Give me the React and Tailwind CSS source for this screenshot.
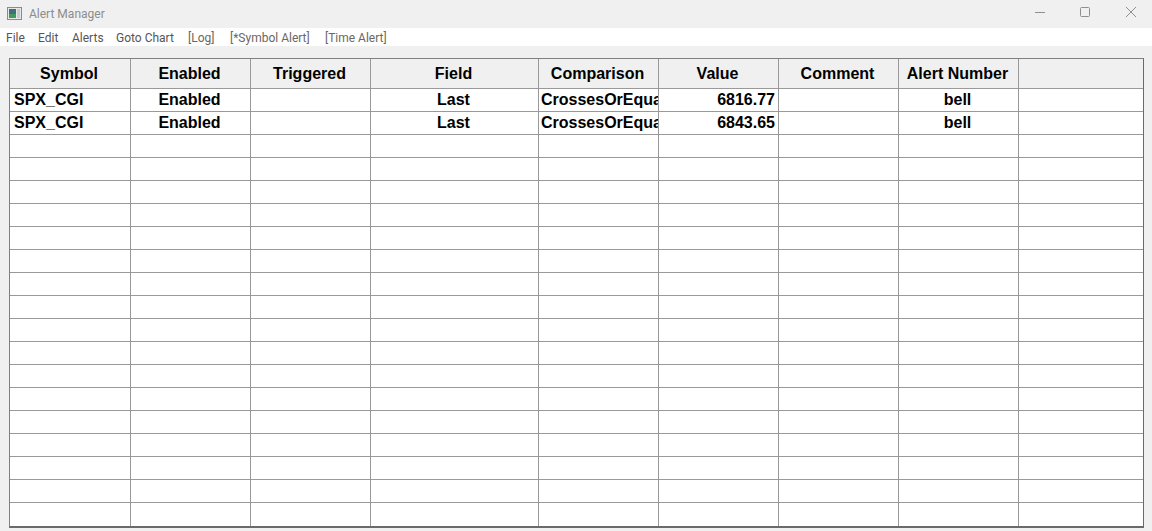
import React from 'react'

const menus = [
  { label: 'File', width: 'w-[18px]' },
  { label: 'Edit', width: 'w-[20px]' },
  { label: 'Alerts', width: 'w-[30px]' },
  { label: 'Goto Chart', width: 'w-[58px]' },
  { label: '[Log]', width: 'w-[28px]' },
  { label: '[*Symbol Alert]', width: 'w-[81px]' },
  { label: '[Time Alert]', width: 'w-[63px]' },
]
const headers = ['Symbol', 'Enabled', 'Triggered', 'Field', 'Comparison', 'Value', 'Comment', 'Alert Number', '']

const alerts = [
  { symbol: 'SPX_CGI', enabled: 'Enabled', field: 'Last', comparison: 'CrossesOrEqual', value: '6816.77', alertNumber: 'bell' },
  { symbol: 'SPX_CGI', enabled: 'Enabled', field: 'Last', comparison: 'CrossesOrEqual', value: '6843.65', alertNumber: 'bell' },
]

const emptyRows = Array.from({ length: 17 })
const gridCols = 'grid grid-cols-[121px_120px_120px_168px_120px_120px_120px_120px_124px]'

const AppIcon = () => (
  <svg width="15" height="13" viewBox="0 0 15 13" className="shrink-0">
    <rect x="0.5" y="0.5" width="14" height="12" fill="#e8e8e8" stroke="#8a8a8a" />
    <rect x="2" y="2" width="7" height="9" fill="#3f6f78" />
    <rect x="2" y="7" width="7" height="4" fill="#3f9a5c" />
    <rect x="10" y="2" width="3" height="9" fill="#c4ccd2" />
  </svg>
)

// window buttons are drawn 1px thin like the native caption icons
const WindowButtons = () => (
  <div className="flex items-center gap-[35px] pr-[16px] mb-[4px]">
    <svg width="10" height="10" viewBox="0 0 10 10" stroke="#8f8f8f" fill="none">
      <path d="M0 5.5H10" />
    </svg>
    <svg width="10" height="10" viewBox="0 0 10 10" stroke="#8f8f8f" fill="none">
      <rect x="0.5" y="0.5" width="9" height="9" rx="1" />
    </svg>
    <svg width="10" height="10" viewBox="0 0 10 10" stroke="#8f8f8f" fill="none" className="ml-[1px]">
      <path d="M0 0L10 10M10 0L0 10" />
    </svg>
  </div>
)

const Cell = ({ children, className = '' }) => (
  <div className={`h-[23px] border-r border-b border-[#999999] overflow-hidden whitespace-nowrap leading-[22px] ${className}`}>
    {children}
  </div>
)

const App = () => {
  return (
    <div className="w-[1152px] h-[531px] overflow-hidden flex flex-col bg-[#f0f0f0] font-['Liberation_Sans',Arial,sans-serif]">
      {/* Title bar */}
      <div className="h-[28px] flex items-center justify-between pl-[7px]">
        <div className="flex items-center gap-[7px] mb-[1px]">
          <AppIcon />
          <span className="text-[12px] text-[#8c8c8c] font-['Roboto',sans-serif]">Alert Manager</span>
        </div>
        <WindowButtons />
      </div>

      {/* Menu bar */}
      <div className="h-[18px] bg-white flex items-center gap-[14px] pl-[6px] pt-[1px] text-[12px] text-[#555555] font-['Roboto',sans-serif]">
        {menus.map((m) => (
          <span key={m.label} className={`${m.width} whitespace-nowrap ${m.label.startsWith('[') ? 'text-[#6e6660]' : ''}`}>{m.label}</span>
        ))}
      </div>

      {/* Alerts table */}
      <div className="mt-[12px] ml-[9px] w-[1135px] border-t border-l border-r border-b-2 border-t-[#808080] border-l-[#808080] border-r-[#6a6a6a] border-b-[#6a6a6a] text-[16px] font-bold text-black">
        <div className={`${gridCols} bg-[#f0f0f0] text-center`}>
          {headers.map((h, i) => (
            <div key={i} className="h-[30px] pr-[2px] border-r border-b border-[#999999] leading-[29px] last:border-r-0">{h}</div>
          ))}
        </div>
        <div className="bg-white">
          {alerts.map((a, i) => (
            <div key={i} className={gridCols}>
              <Cell className="pl-[4px]">{a.symbol}</Cell>
              <Cell className="text-center pr-[2px]">{a.enabled}</Cell>
              <Cell />
              <Cell className="text-center pr-[2px]">{a.field}</Cell>
              <Cell className="pl-[2px]">{a.comparison}</Cell>
              <Cell className="text-right pr-[3px]">{a.value}</Cell>
              <Cell />
              <Cell className="text-center pr-[2px]">{a.alertNumber}</Cell>
              <Cell className="border-r-0" />
            </div>
          ))}
          {emptyRows.map((_, i) => (
            <div key={i} className={gridCols}>
              {headers.map((h, j) => (
                <Cell key={j} className={`${j === 8 ? 'border-r-0' : ''} ${i === emptyRows.length - 1 ? 'border-b-0' : ''}`} />
              ))}
            </div>
          ))}
        </div>
      </div>
    </div>
  )
}

export default App
